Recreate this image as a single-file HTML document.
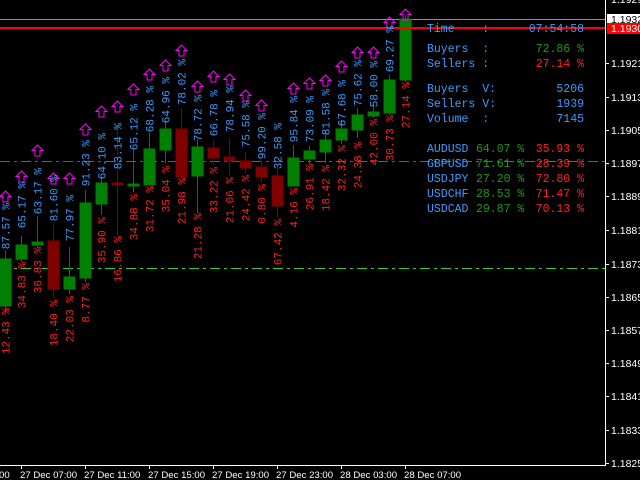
<!DOCTYPE html>
<html><head><meta charset="utf-8"><style>
html,body{margin:0;padding:0;background:#000;width:640px;height:480px;overflow:hidden}
svg{display:block}
.b{fill:#3d9cff;font:11px "Liberation Mono",monospace}
.r{fill:#ff2222;font:11px "Liberation Mono",monospace}
.ax{fill:#fff;font:10.5px "Liberation Sans",sans-serif}
.bx{fill:#fff;font:9.6px "Liberation Sans",sans-serif}
.p{font:11.5px "Liberation Mono",monospace}
</style></head><body>
<svg width="640" height="480" viewBox="0 0 640 480" xmlns="http://www.w3.org/2000/svg">
<defs>
<path id="ar" d="M0,0 L5.5,5.5 L2.5,5.5 L2.5,11 L-2.5,11 L-2.5,5.5 L-5.5,5.5 Z" fill="none" stroke="#ff00ff" stroke-width="1"/>
</defs>
<rect width="640" height="480" fill="#000"/>
<line x1="0" y1="19.5" x2="605" y2="19.5" stroke="#909090"/>
<line x1="0" y1="161.5" x2="605" y2="161.5" stroke="#ff2020" stroke-dasharray="10,4,3,4"/>
<line x1="0" y1="268.5" x2="605" y2="268.5" stroke="#33cc33" stroke-dasharray="10,4,3,4"/>

<g stroke-width="1">
<g stroke="#008000" fill="#008000">
<line x1="5.5" y1="250" x2="5.5" y2="312"/><rect x="0" y="259" width="11" height="47"/>
<line x1="21.5" y1="236" x2="21.5" y2="262"/><rect x="16" y="245" width="11" height="14"/>
<line x1="37.5" y1="216" x2="37.5" y2="248"/><rect x="32" y="242" width="11" height="3"/>
<line x1="69.5" y1="247" x2="69.5" y2="294"/><rect x="64" y="277" width="11" height="12"/>
<line x1="85.5" y1="190" x2="85.5" y2="282"/><rect x="80" y="203" width="11" height="75"/>
<line x1="101.5" y1="177" x2="101.5" y2="215"/><rect x="96" y="183" width="11" height="21"/>
<line x1="133.5" y1="150" x2="133.5" y2="192"/><rect x="128" y="184" width="11" height="2"/>
<line x1="149.5" y1="133" x2="149.5" y2="185"/><rect x="144" y="149" width="11" height="36"/>
<line x1="165.5" y1="122" x2="165.5" y2="163"/><rect x="160" y="129" width="11" height="21"/>
<line x1="197.5" y1="139" x2="197.5" y2="213"/><rect x="192" y="147" width="11" height="29"/>
<line x1="293.5" y1="145" x2="293.5" y2="186"/><rect x="288" y="158" width="11" height="28"/>
<line x1="309.5" y1="146" x2="309.5" y2="165"/><rect x="304" y="151" width="11" height="8"/>
<line x1="325.5" y1="130" x2="325.5" y2="163"/><rect x="320" y="140" width="11" height="12"/>
<line x1="341.5" y1="120" x2="341.5" y2="144"/><rect x="336" y="129" width="11" height="11"/>
<line x1="357.5" y1="108" x2="357.5" y2="138"/><rect x="352" y="115" width="11" height="15"/>
<line x1="373.5" y1="104" x2="373.5" y2="118"/><rect x="368" y="112" width="11" height="4"/>
<line x1="389.5" y1="75" x2="389.5" y2="115"/><rect x="384" y="80" width="11" height="33"/>
<line x1="405.5" y1="15" x2="405.5" y2="82"/><rect x="400" y="19" width="11" height="61"/>
</g>
<g stroke="#800000" fill="#800000">
<line x1="53.5" y1="225" x2="53.5" y2="298"/><rect x="48" y="241" width="11" height="48"/>
<line x1="117.5" y1="125" x2="117.5" y2="235"/><rect x="112" y="183" width="11" height="2"/>
<line x1="181.5" y1="108" x2="181.5" y2="177"/><rect x="176" y="129" width="11" height="48"/>
<line x1="213.5" y1="140" x2="213.5" y2="165"/><rect x="208" y="148" width="11" height="10"/>
<line x1="229.5" y1="138" x2="229.5" y2="175"/><rect x="224" y="157" width="11" height="4"/>
<line x1="245.5" y1="152" x2="245.5" y2="173"/><rect x="240" y="161" width="11" height="7"/>
<line x1="261.5" y1="160" x2="261.5" y2="183"/><rect x="256" y="167" width="11" height="10"/>
<line x1="277.5" y1="165" x2="277.5" y2="218"/><rect x="272" y="176" width="11" height="30"/>
</g>
</g>

<line x1="0" y1="28" x2="605" y2="28" stroke="#ff0000" stroke-width="2"/>

<use href="#ar" x="5.5" y="191"/><use href="#ar" x="21.5" y="171"/><use href="#ar" x="37.5" y="145"/>
<use href="#ar" x="53.5" y="173"/><use href="#ar" x="69.5" y="173"/><use href="#ar" x="85.5" y="124"/>
<use href="#ar" x="101.5" y="106"/><use href="#ar" x="117.5" y="101"/><use href="#ar" x="133.5" y="84"/>
<use href="#ar" x="149.5" y="69"/><use href="#ar" x="165.5" y="60"/><use href="#ar" x="181.5" y="45"/>
<use href="#ar" x="197.5" y="81"/><use href="#ar" x="213.5" y="71"/><use href="#ar" x="229.5" y="74"/>
<use href="#ar" x="245.5" y="90"/><use href="#ar" x="261.5" y="100"/><use href="#ar" x="293.5" y="83"/>
<use href="#ar" x="309.5" y="78"/><use href="#ar" x="325.5" y="75"/><use href="#ar" x="341.5" y="61"/>
<use href="#ar" x="357.5" y="47"/><use href="#ar" x="373.5" y="47"/><use href="#ar" x="389.5" y="17"/>
<use href="#ar" x="405.5" y="9"/>

<g class="b" text-anchor="end">
<text transform="translate(9.5,203) rotate(-90)">87.57 %</text>
<text transform="translate(25.5,182) rotate(-90)">65.17 %</text>
<text transform="translate(41.5,168) rotate(-90)">63.17 %</text>
<text transform="translate(57.5,175) rotate(-90)">81.60 %</text>
<text transform="translate(73.5,195) rotate(-90)">77.97 %</text>
<text transform="translate(89.5,140) rotate(-90)">91.23 %</text>
<text transform="translate(105.5,133) rotate(-90)">64.10 %</text>
<text transform="translate(121.5,123) rotate(-90)">83.14 %</text>
<text transform="translate(137.5,104) rotate(-90)">65.12 %</text>
<text transform="translate(153.5,86) rotate(-90)">68.28 %</text>
<text transform="translate(169.5,77) rotate(-90)">64.96 %</text>
<text transform="translate(185.5,59) rotate(-90)">78.02 %</text>
<text transform="translate(201.5,95) rotate(-90)">78.72 %</text>
<text transform="translate(217.5,90) rotate(-90)">66.78 %</text>
<text transform="translate(233.5,86) rotate(-90)">78.94 %</text>
<text transform="translate(249.5,101) rotate(-90)">75.58 %</text>
<text transform="translate(265.5,113) rotate(-90)">99.20 %</text>
<text transform="translate(281.5,123) rotate(-90)">32.58 %</text>
<text transform="translate(297.5,96) rotate(-90)">95.84 %</text>
<text transform="translate(313.5,96) rotate(-90)">73.09 %</text>
<text transform="translate(329.5,89) rotate(-90)">81.58 %</text>
<text transform="translate(345.5,80) rotate(-90)">67.68 %</text>
<text transform="translate(361.5,60) rotate(-90)">75.62 %</text>
<text transform="translate(377.5,61) rotate(-90)">58.00 %</text>
<text transform="translate(393.5,26) rotate(-90)">69.27 %</text>
</g>
<g class="r" text-anchor="end">
<text transform="translate(9.5,308) rotate(-90)">12.43 %</text>
<text transform="translate(25.5,262) rotate(-90)">34.83 %</text>
<text transform="translate(41.5,247) rotate(-90)">36.83 %</text>
<text transform="translate(57.5,300) rotate(-90)">18.40 %</text>
<text transform="translate(73.5,296) rotate(-90)">22.03 %</text>
<text transform="translate(89.5,283) rotate(-90)">8.77 %</text>
<text transform="translate(105.5,217) rotate(-90)">35.90 %</text>
<text transform="translate(121.5,236) rotate(-90)">16.86 %</text>
<text transform="translate(137.5,194) rotate(-90)">34.88 %</text>
<text transform="translate(153.5,186) rotate(-90)">31.72 %</text>
<text transform="translate(169.5,166) rotate(-90)">35.04 %</text>
<text transform="translate(185.5,178) rotate(-90)">21.98 %</text>
<text transform="translate(201.5,213) rotate(-90)">21.28 %</text>
<text transform="translate(217.5,167) rotate(-90)">33.22 %</text>
<text transform="translate(233.5,177) rotate(-90)">21.06 %</text>
<text transform="translate(249.5,175) rotate(-90)">24.42 %</text>
<text transform="translate(265.5,184) rotate(-90)">0.80 %</text>
<text transform="translate(281.5,219) rotate(-90)">67.42 %</text>
<text transform="translate(297.5,188) rotate(-90)">4.16 %</text>
<text transform="translate(313.5,164) rotate(-90)">26.91 %</text>
<text transform="translate(329.5,165) rotate(-90)">18.42 %</text>
<text transform="translate(345.5,145) rotate(-90)">32.32 %</text>
<text transform="translate(361.5,142) rotate(-90)">24.38 %</text>
<text transform="translate(377.5,119) rotate(-90)">42.00 %</text>
<text transform="translate(393.5,115) rotate(-90)">30.73 %</text>
<text transform="translate(409.5,82) rotate(-90)">27.14 %</text>
</g>

<g class="p">
<text x="427" y="32" fill="#3d9cff" xml:space="preserve">Time    :</text>
<text x="584" y="32" fill="#3d9cff" text-anchor="end">07:54:58</text>
<text x="427" y="52" fill="#3d9cff" xml:space="preserve">Buyers  :</text>
<text x="584" y="52" fill="#1a9a1a" text-anchor="end">72.86 %</text>
<text x="427" y="67" fill="#3d9cff" xml:space="preserve">Sellers :</text>
<text x="584" y="67" fill="#ff2222" text-anchor="end">27.14 %</text>
<text x="427" y="92" fill="#3d9cff" xml:space="preserve">Buyers  V:</text>
<text x="584" y="92" fill="#3d9cff" text-anchor="end">5206</text>
<text x="427" y="107" fill="#3d9cff" xml:space="preserve">Sellers V:</text>
<text x="584" y="107" fill="#3d9cff" text-anchor="end">1939</text>
<text x="427" y="122" fill="#3d9cff" xml:space="preserve">Volume  :</text>
<text x="584" y="122" fill="#3d9cff" text-anchor="end">7145</text>

<text x="427" y="152" fill="#3d9cff">AUDUSD</text><text x="476" y="152" fill="#1a9a1a">64.07 %</text><text x="584" y="152" fill="#ff2222" text-anchor="end">35.93 %</text>
<text x="427" y="167" fill="#3d9cff">GBPUSD</text><text x="476" y="167" fill="#1a9a1a">71.61 %</text><text x="584" y="167" fill="#ff2222" text-anchor="end">28.39 %</text>
<text x="427" y="182" fill="#3d9cff">USDJPY</text><text x="476" y="182" fill="#1a9a1a">27.20 %</text><text x="584" y="182" fill="#ff2222" text-anchor="end">72.80 %</text>
<text x="427" y="197" fill="#3d9cff">USDCHF</text><text x="476" y="197" fill="#1a9a1a">28.53 %</text><text x="584" y="197" fill="#ff2222" text-anchor="end">71.47 %</text>
<text x="427" y="212" fill="#3d9cff">USDCAD</text><text x="476" y="212" fill="#1a9a1a">29.87 %</text><text x="584" y="212" fill="#ff2222" text-anchor="end">70.13 %</text>
</g>

<line x1="605.5" y1="0" x2="605.5" y2="465" stroke="#fff"/>
<line x1="0" y1="465.5" x2="606" y2="465.5" stroke="#fff"/>
<g stroke="#fff">
<line x1="605" y1="63.5" x2="609" y2="63.5"/><line x1="605" y1="97.5" x2="609" y2="97.5"/>
<line x1="605" y1="130.5" x2="609" y2="130.5"/><line x1="605" y1="163.5" x2="609" y2="163.5"/>
<line x1="605" y1="196.5" x2="609" y2="196.5"/><line x1="605" y1="230.5" x2="609" y2="230.5"/>
<line x1="605" y1="264.5" x2="609" y2="264.5"/><line x1="605" y1="297.5" x2="609" y2="297.5"/>
<line x1="605" y1="330.5" x2="609" y2="330.5"/><line x1="605" y1="363.5" x2="609" y2="363.5"/>
<line x1="605" y1="396.5" x2="609" y2="396.5"/><line x1="605" y1="430.5" x2="609" y2="430.5"/>
<line x1="605" y1="463.5" x2="609" y2="463.5"/>
<line x1="21.5" y1="465" x2="21.5" y2="469"/><line x1="85.5" y1="465" x2="85.5" y2="469"/>
<line x1="149.5" y1="465" x2="149.5" y2="469"/><line x1="213.5" y1="465" x2="213.5" y2="469"/>
<line x1="277.5" y1="465" x2="277.5" y2="469"/><line x1="341.5" y1="465" x2="341.5" y2="469"/>
<line x1="405.5" y1="465" x2="405.5" y2="469"/>
</g>
<rect x="607" y="14" width="33" height="11" fill="#fff"/>
<rect x="607" y="23" width="33" height="11" fill="#ff0000"/>
<g class="ax">
<text x="611" y="3">1.19295</text>
<text x="611" y="23" fill="#000">1.19322</text>
<text x="611" y="32">1.19300</text>
<text x="611" y="67">1.19215</text>
<text x="611" y="101">1.19135</text>
<text x="611" y="134">1.19055</text>
<text x="611" y="167">1.18975</text>
<text x="611" y="200">1.18895</text>
<text x="611" y="234">1.18815</text>
<text x="611" y="268">1.18735</text>
<text x="611" y="301">1.18655</text>
<text x="611" y="334">1.18575</text>
<text x="611" y="367">1.18495</text>
<text x="611" y="400">1.18415</text>
<text x="611" y="434">1.18335</text>
<text x="611" y="467">1.18255</text>
</g>
<g class="bx">
<text x="-1" y="478">00</text>
<text x="20" y="478">27 Dec 07:00</text>
<text x="84" y="478">27 Dec 11:00</text>
<text x="148" y="478">27 Dec 15:00</text>
<text x="212" y="478">27 Dec 19:00</text>
<text x="276" y="478">27 Dec 23:00</text>
<text x="340" y="478">28 Dec 03:00</text>
<text x="404" y="478">28 Dec 07:00</text>
</g>
</svg>
</body></html>
